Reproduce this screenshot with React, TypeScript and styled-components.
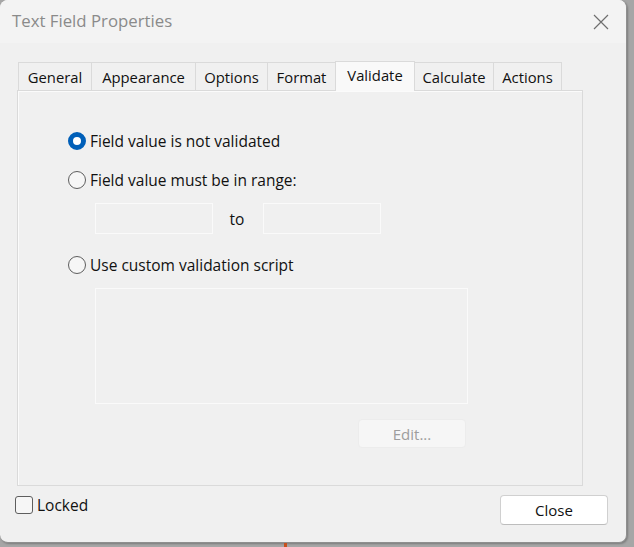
import React from "react";
import styled, { createGlobalStyle } from "styled-components";

const GlobalStyle = createGlobalStyle`
	html, body {
		margin: 0;
		padding: 0;
	}
	body {
		width: 634px;
		height: 547px;
		overflow: hidden;
		background: #a6a6a6;
		font-family: "Open Sans", "Noto Sans", sans-serif;
	}
	* {
		box-sizing: border-box;
	}
`;

const tabs = [
	{ label: "General", width: 74 },
	{ label: "Appearance", width: 105 },
	{ label: "Options", width: 73 },
	{ label: "Format", width: 69 },
	{ label: "Validate", width: 80 },
	{ label: "Calculate", width: 80 },
	{ label: "Actions", width: 69 },
];

export default function App() {
	return (
		<>
			<GlobalStyle />
			<Desktop>
				<Window>
					<TitleBar>
						<Title>Text Field Properties</Title>
						<CloseIcon width="16" height="16" viewBox="0 0 16 16">
							<path d="M1 1 L15 15 M15 1 L1 15" stroke="#6e6e6e" strokeWidth="1.2" />
						</CloseIcon>
					</TitleBar>
					<Body>
						<TabRow>
							{tabs.map((t) => (
								<Tab key={t.label} $active={t.label === "Validate"} style={{ width: t.width }}>
									{t.label}
								</Tab>
							))}
						</TabRow>
						<Panel>
							<Option>
								<Radio $checked />
								<Label>Field value is not validated</Label>
							</Option>
							<Option>
								<Radio />
								<Label>Field value must be in range:</Label>
							</Option>
							<RangeRow>
								<Field />
								<To>to</To>
								<Field />
							</RangeRow>
							<Option>
								<Radio />
								<Label>Use custom validation script</Label>
							</Option>
							<ScriptBox />
							<EditRow>
								<EditButton disabled>Edit...</EditButton>
							</EditRow>
						</Panel>
						<Footer>
							<CheckWrap>
								<Checkbox />
								<Label>Locked</Label>
							</CheckWrap>
							<CloseButton>Close</CloseButton>
						</Footer>
					</Body>
				</Window>
				<Marker />
			</Desktop>
		</>
	);
}

const Desktop = styled.div`
	position: relative;
	width: 634px;
	height: 547px;
`;

const Window = styled.div`
	width: 627px;
	height: 543px;
	background: #f0f0f0;
	border-radius: 8px;
	border-right: 1px solid #8f8f8f;
	border-bottom: 1px solid #8f8f8f;
	box-shadow: 1px 1px 2px rgba(0, 0, 0, 0.25);
	overflow: hidden;
	display: flex;
	flex-direction: column;
`;

const TitleBar = styled.div`
	height: 43px;
	flex-shrink: 0;
	background: #f3f3f3;
	display: flex;
	align-items: center;
	justify-content: space-between;
	padding: 0 17px 2px 12px;
`;

const Title = styled.span`
	font-size: 16.8px;
	color: #8a8a8a;
`;

const CloseIcon = styled.svg`
	display: block;
	margin-top: 2px;
`;

const Body = styled.div`
	flex: 1;
	display: flex;
	flex-direction: column;
	padding: 19px 0 0 17px;
`;

const TabRow = styled.div`
	display: flex;
	padding-left: 1px;
	height: 28px;
	position: relative;
	z-index: 1;
`;

const Tab = styled.div<{ $active?: boolean }>`
	display: flex;
	align-items: center;
	justify-content: center;
	font-size: 14.8px;
	color: #111;
	border: 1px solid #dadada;
	border-bottom: none;
	margin-left: -1px;
	background: ${(p) => (p.$active ? "#f9f9f9" : "#f0f0f0")};
	height: ${(p) => (p.$active ? "30px" : "28px")};
	margin-top: ${(p) => (p.$active ? "-1px" : "0")};
	padding-bottom: ${(p) => (p.$active ? "4px" : "0")};
	&:first-child {
		margin-left: 0;
	}
`;

const Panel = styled.div`
	width: 566px;
	height: 396px;
	border: 1px solid #dadada;
	box-shadow: inset 1px 1px 0 #fbfbfb;
	background: #f0f0f0;
	padding: 41px 0 0 50px;
	display: flex;
	flex-direction: column;
`;

const Option = styled.div`
	display: flex;
	align-items: center;
	gap: 4px;
	height: 18px;
	margin-bottom: 21px;
`;

const Radio = styled.span<{ $checked?: boolean }>`
	width: 18px;
	height: 18px;
	border-radius: 50%;
	flex-shrink: 0;
	${(p) =>
		p.$checked
			? `
		border: 5px solid #005fb8;
		background: #ffffff;
	`
			: `
		border: 1px solid #5e5e5e;
		background: #f6f6f6;
	`}
`;

const Label = styled.span`
	font-size: 15.5px;
	color: #111;
	line-height: 18px;
`;

const RangeRow = styled.div`
	display: flex;
	align-items: center;
	margin: -7px 0 22px 27px;
`;

const Field = styled.div`
	width: 118px;
	height: 31px;
	border: 1px solid #fafafa;
	background: #f0f0f0;
`;

const To = styled.span`
	width: 50px;
	text-align: center;
	font-size: 15.5px;
	color: #111;
	padding-right: 2px;
`;

const ScriptBox = styled.div`
	width: 373px;
	height: 116px;
	margin: -7px 0 0 27px;
	border: 1px solid #fafafa;
	background: #f0f0f0;
`;

const EditRow = styled.div`
	display: flex;
	justify-content: flex-end;
	width: 398px;
	margin-top: 15px;
`;

const EditButton = styled.button`
	width: 108px;
	height: 29px;
	border: 1px solid #ececec;
	border-radius: 4px;
	background: #f6f6f6;
	color: #9d9d9d;
	font-family: inherit;
	font-size: 15px;
	padding: 0;
`;

const Footer = styled.div`
	display: flex;
	justify-content: space-between;
	align-items: flex-start;
	width: 593px;
	margin: 9px 0 0 -2px;
`;

const CheckWrap = styled.label`
	display: flex;
	align-items: center;
	gap: 4px;
	margin-top: 1px;
`;

const Checkbox = styled.span`
	width: 18px;
	height: 18px;
	border: 1px solid #5e5e5e;
	border-radius: 3px;
	background: #f6f6f6;
`;

const CloseButton = styled.button`
	width: 108px;
	height: 30px;
	border: 1px solid #d0d0d0;
	border-bottom-color: #bdbdbd;
	border-radius: 4px;
	background: #ffffff;
	color: #111;
	font-family: inherit;
	font-size: 15px;
	padding: 0;
`;

const Marker = styled.span`
	position: absolute;
	left: 284px;
	top: 543px;
	width: 3px;
	height: 4px;
	background: #c8501e;
`;
